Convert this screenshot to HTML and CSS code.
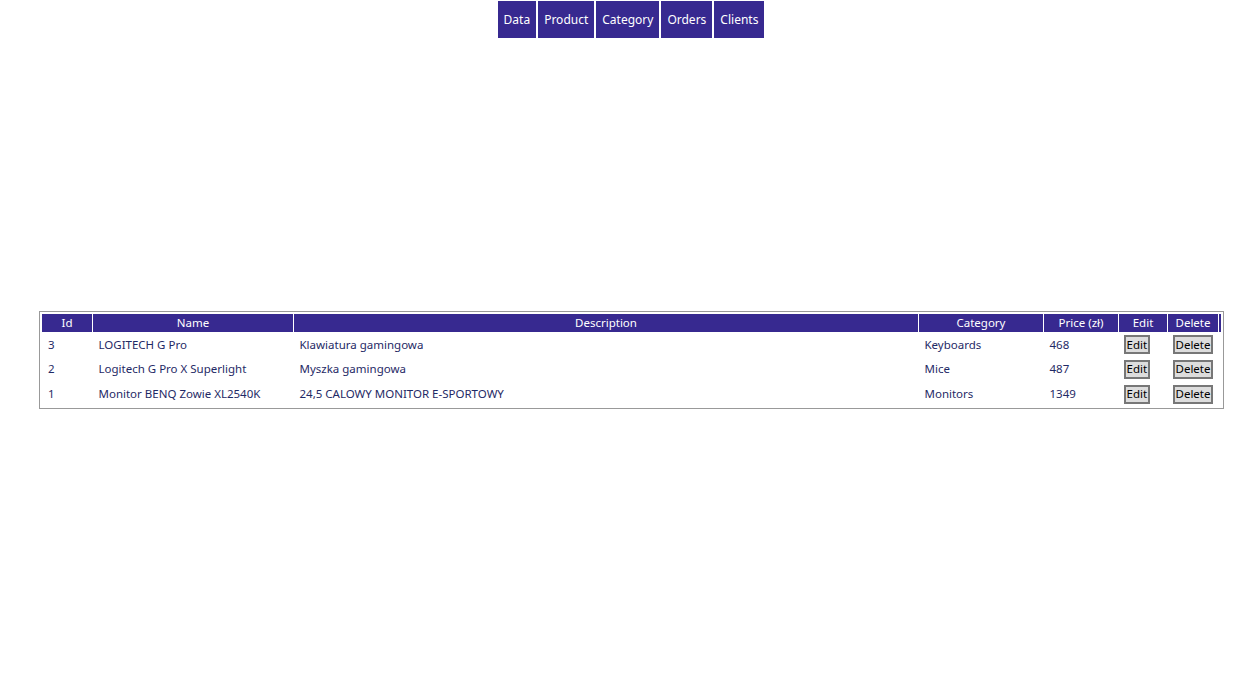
FILE: index.html
```html
<!DOCTYPE html>
<html lang="en">
<head>
    <meta charset="UTF-8">
    <title>Products</title>
    <link rel="stylesheet" href="styles.css">
</head>
<body>
<div class="nav">
    <a href="#">Data</a>
    <a href="#">Product</a>
    <a href="#">Category</a>
    <a href="#">Orders</a>
    <a href="#">Clients</a>
</div>

<div class="list">
    <table class="grid">
        <thead>
        <tr>
            <th class="c-id">Id</th>
            <th class="c-name">Name</th>
            <th class="c-desc">Description</th>
            <th class="c-cat">Category</th>
            <th class="c-price">Price (zł)</th>
            <th class="c-edit">Edit</th>
            <th class="c-del">Delete</th>
            <th class="c-end"></th>
        </tr>
        </thead>
        <tbody>
        <tr>
            <td>3</td>
            <td>LOGITECH G Pro</td>
            <td>Klawiatura gamingowa</td>
            <td>Keyboards</td>
            <td>468</td>
            <td class="btn-cell"><button class="btn">Edit</button></td>
            <td class="btn-cell"><button class="btn">Delete</button></td>
            <td></td>
        </tr>
        <tr>
            <td>2</td>
            <td>Logitech G Pro X Superlight</td>
            <td>Myszka gamingowa</td>
            <td>Mice</td>
            <td>487</td>
            <td class="btn-cell"><button class="btn">Edit</button></td>
            <td class="btn-cell"><button class="btn">Delete</button></td>
            <td></td>
        </tr>
        <tr>
            <td>1</td>
            <td>Monitor BENQ Zowie XL2540K</td>
            <td>24,5 CALOWY MONITOR E-SPORTOWY</td>
            <td>Monitors</td>
            <td>1349</td>
            <td class="btn-cell"><button class="btn">Edit</button></td>
            <td class="btn-cell"><button class="btn">Delete</button></td>
            <td></td>
        </tr>
        </tbody>
    </table>
</div>
</body>
</html>
```

FILE: styles.css
```css
@charset "UTF-8";
/* reset */
body,table,th,td,button{margin:0;padding:0}
body{font:11.5px/16px "Noto Sans", "Open Sans", sans-serif;color:#1f2a66;background:#fff;}
a{text-decoration:none}

/* top menu */
.nav{
    display:flex;
    justify-content:center;
    gap:2px;
    padding:1px 0 0 5px;
}
.nav a{
    display:block;
    height:37px;
    line-height:37px;
    padding:0 6px;
    background:#372990;
    color:#fff;
    font-size:12px;
}

/* products table */
.list{
    box-sizing:border-box;
    width:1185px;
    margin:273px 0 0 39px;
    border:1px solid #999;
    padding:2px 0 1px 2px;
}
.grid{
    border-collapse:collapse;
    table-layout:fixed;
    width:1179px;
}
.grid th{
    background:#372990;
    color:#fff;
    font-weight:normal;
    height:18px;
    padding:0;
    text-align:center;
    border-left:1px solid #fff;
}
.grid th:first-child{border-left:0;}
.grid td{
    height:23.5px;
    padding:1px 6px 0;
    text-align:left;
    white-space:nowrap;
}
.grid tr:last-child td{height:24.5px;}
.c-id{width:50px}
.c-name{width:200px}
.c-desc{width:624px}
.c-cat{width:124px}
.c-price{width:74px}
.c-edit{width:48px}
.c-del{width:50px}
.c-end{width:2px}
.grid td.btn-cell{padding:1px 0 0 5px;}
.btn{
    font:11.5px/14px "Noto Sans", "Open Sans", sans-serif;
    color:#000;
    background:#ddd;
    border:2px solid #777;
    padding:0 1px;
    height:19px;
}
```
